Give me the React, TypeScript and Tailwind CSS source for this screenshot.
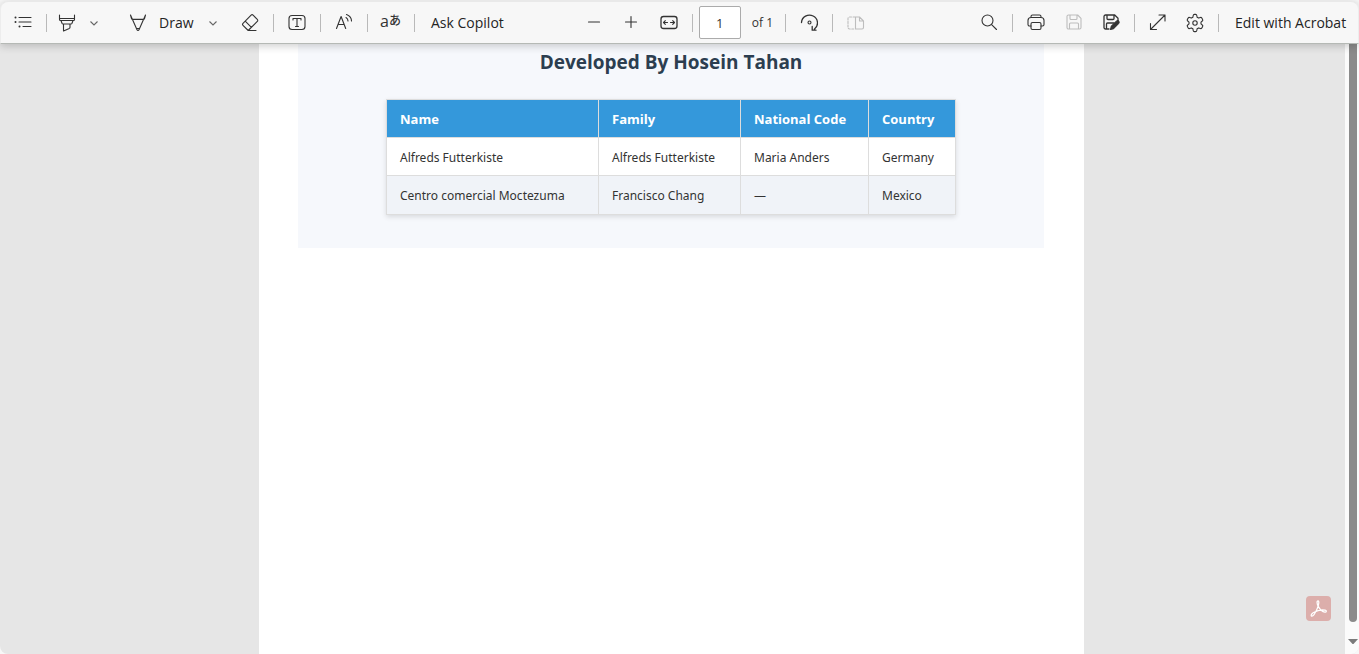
import React from "react";

const rows = [
  ["Alfreds Futterkiste", "Alfreds Futterkiste", "Maria Anders", "Germany"],
  ["Centro comercial Moctezuma", "Francisco Chang", "—", "Mexico"],
];

function Icon({ children, size = 20 }: { children: React.ReactNode; size?: number }) {
  return (
    <svg
      width={size}
      height={size}
      viewBox="0 0 20 20"
      fill="none"
      stroke="currentColor"
      strokeWidth="1.1"
      strokeLinecap="round"
      strokeLinejoin="round"
      aria-hidden="true"
    >
      {children}
    </svg>
  );
}

function Tool({
  label,
  children,
  disabled = false,
  width = "w-[37px]",
}: {
  label: string;
  children: React.ReactNode;
  disabled?: boolean;
  width?: string;
}) {
  return (
    <button
      type="button"
      aria-label={label}
      disabled={disabled}
      className={`flex h-8 shrink-0 items-center justify-center disabled:text-[#bdbdbd] ${width}`}
    >
      {children}
    </button>
  );
}

function Divider() {
  return <span className="mr-1 ml-[5px] h-[18px] w-px shrink-0 bg-[#b9b9b9]" />;
}

function Chevron() {
  return (
    <svg width="10" height="10" viewBox="0 0 10 10" fill="none" stroke="#666" strokeWidth="1.1" aria-hidden="true">
      <path d="M1.5 3.5 5 7l3.5-3.5" />
    </svg>
  );
}

function Toolbar() {
  return (
    <header className="relative z-10 flex h-[43px] items-center rounded-t-lg border-x border-t border-b border-x-[#ededed] border-t-[#e9e9e9] border-b-[#b5b9b5] bg-[#f7f7f7] text-[#333] shadow-[0_2px_8px_rgba(0,0,0,0.2)]">
      <div className="flex items-center pl-[3px]">
        <Tool label="Contents">
          <Icon>
            <path d="M6 4.500h12M6 9h12M10 13.500h8" />
            <path d="M2.500 4.500h.01M2.500 9h.01M6.500 13.500h.01" strokeWidth="2" />
          </Icon>
        </Tool>
        <Divider />
        <Tool label="Highlight" width="w-[31px]">
          <Icon>
            <path d="M2.500 2v4.500c0 .6.400 1 1 1h13c.6 0 1-.4 1-1V2M2.500 5.500h15M4 7.500l1 2.800c.2.500.6.700 1 .7h8c.5 0 .8-.2 1-.7l1-2.800M6.500 11v7l5.800-2.600c.500-.3.700-.6.700-1.100V11" />
          </Icon>
        </Tool>
        <Tool label="Highlight options" width="w-6">
          <Chevron />
        </Tool>
        <button type="button" className="ml-[22px] flex h-8 w-[72px] shrink-0 items-center gap-[11px] text-[14px] text-[#242424]">
          <span className="text-[#333]">
            <Icon>
              <path d="M2.500 2 9 16.800c.4.9 1.600.9 2 0L17.500 2M2.500 2l1 3.500c.2.600.6.900 1.200.9h10.600c.6 0 1-.3 1.200-.9l1-3.500M8.500 15.500h3" />
            </Icon>
          </span>
          Draw
        </button>
        <Tool label="Draw options" width="w-[26px]">
          <Chevron />
        </Tool>
        <span className="w-[5px]" />
        <Tool label="Erase">
          <Icon>
            <path d="M11.100 2.200 3 10.300c-.6.600-.6 1.400 0 2l4.200 4.200c.600.600 1.400.600 2 0l8.100-8.100c.600-.600.600-1.400 0-2l-4.200-4.200c-.600-.600-1.400-.600-2 0ZM5.200 8.200l6.200 6.200M8 17.500h8" />
          </Icon>
        </Tool>
        <Divider />
        <Tool label="Add text">
          <Icon>
            <rect x="2" y="2.500" width="16" height="14" rx="3" />
            <path d="M6 7V5.500h8V7M10 5.500v8M8.500 13.500h3" />
          </Icon>
        </Tool>
        <Divider />
        <Tool label="Read aloud">
          <Icon>
            <path d="M2.500 15.500 7.100 3.500l4.600 12M4 11.500h6.200M12 4.500c1.300.8 2 1.800 2 3.500M12.500 1.500c3 1.200 5 3.400 5 6.500" />
          </Icon>
        </Tool>
        <Divider />
        <Tool label="Translate">
          <span className="flex items-center pb-1 font-['Open_Sans','Noto_Sans_CJK_JP',sans-serif] text-[16px] leading-none">
            a<span className="text-[12px] font-medium">あ</span>
          </span>
        </Tool>
        <Divider />
        <button type="button" className="h-8 shrink-0 pl-3 text-[14px] whitespace-nowrap text-[#242424]">
          Ask Copilot
        </button>
      </div>

      <div className="ml-[72px] flex items-center">
        <Tool label="Zoom out">
          <Icon>
            <path d="M4.500 9h11" />
          </Icon>
        </Tool>
        <Tool label="Zoom in">
          <Icon>
            <path d="M4.500 9h11M10 3.500v11" />
          </Icon>
        </Tool>
        <Tool label="Fit to width">
          <Icon>
            <rect x="3" y="3.500" width="16" height="12" rx="2.500" strokeWidth="1.300" />
            <path d="M5.500 9.500h4M7.300 7.700 5.500 9.500l1.800 1.800M16.500 9.500h-4M14.700 7.700l1.800 1.800-1.800 1.800" />
          </Icon>
        </Tool>
        <Divider />
        <input
          aria-label="Page number"
          defaultValue="1"
          className="ml-0.5 h-[33px] w-[42px] rounded-[2px] border border-[#ababab] bg-white text-center text-[13px] text-[#333]"
        />
        <span className="w-[39px] shrink-0 pl-[11px] text-[12px] whitespace-nowrap">of 1</span>
        <Divider />
        <Tool label="Rotate">
          <Icon>
            <path d="M3.500 9.500a8 7.800 0 1 1 13 6.500M18 17.200h-3.800v-3.800" strokeWidth="1.300" />
            <circle cx="11.500" cy="9.500" r="1.500" />
          </Icon>
        </Tool>
        <Divider />
        <Tool label="Page view" disabled>
          <Icon>
            <path d="M10 4H4.500C3.700 4 3 4.700 3 5.500v9c0 .8.700 1.500 1.500 1.500H10" strokeDasharray="2 1.500" />
            <path d="M10.500 4v12h6.500c.8 0 1.500-.7 1.500-1.500V8l-4-4ZM14.500 4v4h4" />
          </Icon>
        </Tool>
      </div>

      <div className="ml-auto flex items-center">
        <Tool label="Find">
          <Icon>
            <circle cx="8.500" cy="7.500" r="5.500" />
            <path d="m12.600 11.600 4.900 4.900" />
          </Icon>
        </Tool>
        <Divider />
        <Tool label="Print" width="w-[38px]">
          <Icon>
            <path d="M5 4.500V3.500C5 2.500 5.700 2 6.500 2h7c.8 0 1.500.5 1.500 1.500v1M5 13H3.500C2.700 13 2 12.300 2 11.500V7.500c0-1.700 1.200-3 3-3h10c1.800 0 3 1.300 3 3v4c0 .8-.7 1.500-1.500 1.500H15" />
            <rect x="5" y="9.500" width="10" height="7" rx="1.500" />
          </Icon>
        </Tool>
        <Tool label="Save" disabled>
          <Icon>
            <path d="M4.500 2h9.200l3.300 3.300v9.200c0 .8-.7 1.500-1.500 1.500h-11c-.8 0-1.500-.7-1.500-1.500v-11C3 2.700 3.700 2 4.500 2ZM6 2v3.500c0 .6.400 1 1 1h5c.6 0 1-.4 1-1V2M5.500 16v-5c0-.6.400-1 1-1h7c.6 0 1 .4 1 1v5" />
          </Icon>
        </Tool>
        <Tool label="Save as">
          <Icon>
            <path d="M8 16H4.500C3.700 16 3 15.300 3 14.500v-11C3 2.700 3.700 2 4.500 2h9.200L17 5.300V8M6 2v3.500c0 .6.400 1 1 1h5c.6 0 1-.4 1-1V2M5.500 16v-5c0-.6.400-1 1-1H13" strokeWidth="1.300" />
            <path d="m9.500 16.500.7-3 5.300-5.300c.7-.7 1.600-.7 2.200-.1.600.6.600 1.500 0 2.200l-5.200 5.400Z" fill="currentColor" />
          </Icon>
        </Tool>
        <Divider />
        <Tool label="Full screen">
          <Icon>
            <path d="M2.500 16.500 17 2M11 2h6v6M2.500 10.500v6h6" />
          </Icon>
        </Tool>
        <Tool label="Settings">
          <Icon>
            <path d="M8.200 2.500c.1-.6.600-1.100 1.200-1.100h1.200c.6 0 1.100.5 1.200 1.100l.3 1.700 1.600.9 1.600-.6c.6-.2 1.200 0 1.500.5l.8 1.400c.3.5.2 1.200-.3 1.600L16 9.100v1.800l1.300 1.100c.5.4.6 1.100.3 1.600l-.8 1.400c-.3.5-.9.7-1.500.5l-1.600-.6-1.600.9-.3 1.700c-.1.600-.6 1.100-1.200 1.100H9.400c-.6 0-1.100-.5-1.200-1.100l-.3-1.700-1.600-.9-1.600.6c-.6.2-1.200 0-1.500-.5l-.8-1.400c-.3-.5-.2-1.200.3-1.600L4 10.900V9.100L2.700 8c-.5-.4-.6-1.100-.3-1.600L3.200 5c.3-.5.9-.7 1.500-.5l1.600.6 1.600-.9Z" />
            <circle cx="10" cy="10" r="2.200" />
          </Icon>
        </Tool>
        <Divider />
        <button type="button" className="h-8 w-[135px] shrink-0 pl-3 text-left text-[14px] whitespace-nowrap text-[#242424]">
          Edit with Acrobat
        </button>
      </div>
    </header>
  );
}

function DocumentPage() {
  return (
    <article className="mx-auto w-[825px] max-w-full bg-white pr-10 pl-[39px]">
      <section className="flex flex-col items-center bg-[#f6f8fc] pt-[3px] pb-[33px] text-[#333]">
        <h1 className="mb-[22px] text-[19px] leading-[30px] font-bold text-[#2c3e50]">Developed By Hosein Tahan</h1>
        <table className="w-[570px] table-fixed border-collapse bg-white text-left text-[13px] shadow-[0_2px_5px_rgba(0,0,0,0.12)]">
          <colgroup>
            <col className="w-[212px]" />
            <col className="w-[142px]" />
            <col className="w-[128px]" />
            <col />
          </colgroup>
          <thead>
            <tr className="h-[38px] bg-[#3498db] text-white">
              {["Name", "Family", "National Code", "Country"].map((h) => (
                <th key={h} className="border border-[#ddd] px-[13px] pt-0.5 font-bold whitespace-nowrap">
                  {h}
                </th>
              ))}
            </tr>
          </thead>
          <tbody>
            {rows.map((row) => (
              <tr key={row[0]} className="h-[38px] even:h-[39px] even:bg-[#f0f3f8]">
                {row.map((cell, i) => (
                  <td
                    key={i}
                    className="border border-[#ddd] px-[13px] pt-0.5 font-['Noto_Sans','Open_Sans',sans-serif] text-[12px] whitespace-nowrap"
                  >
                    {cell}
                  </td>
                ))}
              </tr>
            ))}
          </tbody>
        </table>
      </section>
    </article>
  );
}

function Scrollbar() {
  return (
    <div className="flex w-[14px] shrink-0 flex-col items-center bg-[#fbfbfb] pl-0.5" aria-hidden="true">
      <span className="w-2 flex-1 rounded-b-full bg-[#8b8b8b]" />
      <svg className="mt-4 mb-[9px]" width="10" height="7" viewBox="0 0 10 7" fill="#7b7b7b">
        <path d="M0 1h10L5.500 6h-1Z" />
      </svg>
    </div>
  );
}

export default function App() {
  return (
    <div className="flex min-h-screen flex-col bg-[#f7f7f7] pt-px font-['Open_Sans','Noto_Sans_CJK_JP',sans-serif]">
      <Toolbar />
      <main className="relative flex flex-1 overflow-hidden rounded-b-lg bg-[#e6e6e6]">
        <div className="flex flex-1 pr-0.5">
          <DocumentPage />
        </div>
        <button
          type="button"
          aria-label="Open in Acrobat"
          className="absolute right-7 bottom-[33px] flex size-[25px] items-center justify-center rounded bg-[#dcaeab] text-white"
        >
          <svg width="19" height="19" viewBox="0 0 20 20" fill="none" stroke="currentColor" strokeWidth="1.300" aria-hidden="true">
            <path d="M9.500 2c-1.500 0-1.300 3 .4 6 1.800 3.300 4.300 5.500 6.800 5.900 1.700.3 2.300-1.700.3-2.200-3-.7-8.600.4-12.200 2.500-2.200 1.300-3.300 3.400-1.900 3.800 1.700.4 4.200-4.300 5.900-8.300C10.300 6 11 2 9.500 2Z" />
          </svg>
        </button>
        <Scrollbar />
      </main>
    </div>
  );
}
